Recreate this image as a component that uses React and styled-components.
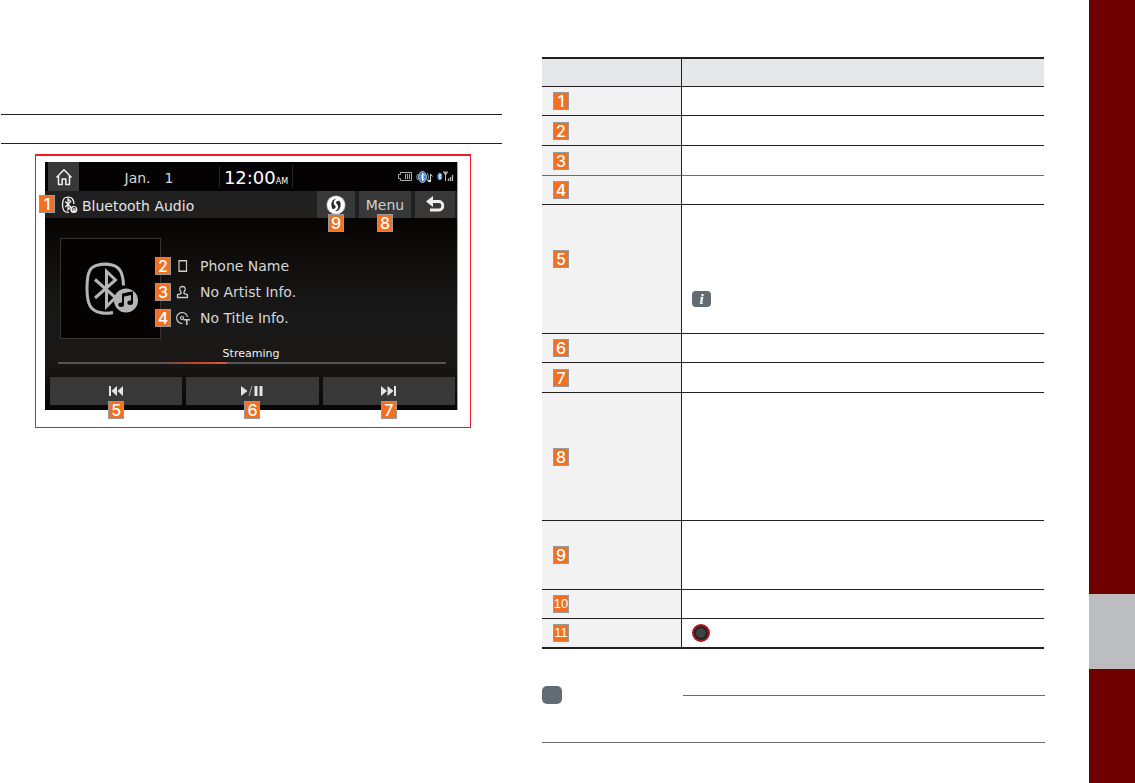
import React from "react";
import styled, { createGlobalStyle } from "styled-components";

const GlobalStyle = createGlobalStyle`
  *, *::before, *::after { box-sizing: border-box; }
  body { margin: 0; background: #fff; font-family: "Liberation Sans", Arial, sans-serif; }
  button { font: inherit; border: 0; padding: 0; margin: 0; color: inherit; cursor: pointer; }
  svg { display: block; }
`;

const Page = styled.div`
  display: flex;
  min-height: 100vh;
`;

const Main = styled.main`
  flex: 1;
  min-width: 0;
  display: grid;
  grid-template-columns: minmax(0, 1fr) minmax(0, 1fr);
  column-gap: 40px;
  align-items: start;
  padding-right: 45px;
`;

const Column = styled.section`
  padding-top: ${(p) => p.$top}px;
`;

const Heading = styled.div`
  height: 30px;
  margin-left: 1px;
  border-top: 1px solid #231f20;
  border-bottom: 1px solid #231f20;
`;

const Figure = styled.figure`
  margin: 10px 31px 0 35px;
  padding: 6px 13px 17px 9px;
  border: 1px solid #ed1c24;
  border-top-width: 2px;
`;

const Display = styled.div`
  display: flex;
  flex-direction: column;
  height: 248px;
  background: linear-gradient(180deg, #060403 56px, #0c0a09 80px, #191919 150px, #191817 200px, #080605 248px);
  box-shadow: 1px 0 0 #aaa;
  color: #d6d6d6;
  font-family: "DejaVu Sans", sans-serif;
  font-size: 14px;
  line-height: 18px;
`;

const Badge = styled.span`
  display: flex;
  align-items: center;
  justify-content: center;
  width: 16px;
  height: 18px;
  border: 1px solid #999;
  background: #f37021;
  color: #fff;
  font-family: ${(p) => (p.$narrow ? '"Liberation Sans"' : "Inter")}, sans-serif;
  font-size: ${(p) => (p.$narrow ? 13 : 16)}px;
  font-weight: ${(p) => (p.$narrow ? 400 : 500)};
  line-height: 16px;
`;

const BadgeAnchor = styled.span`
  position: absolute;
  z-index: 1;
  ${(p) => p.$side === "left" && "left: -6px; top: 4px;"}
  ${(p) => p.$side === "info" && "left: -6px; top: 4px;"}
  ${(p) => p.$side === "bottom" && "left: calc(50% - 8px); bottom: -14px;"}
`;

const StatusBar = styled.div`
  display: flex;
  align-items: center;
  height: 29px;
  padding: 0 3px;
  background: #040203;
`;

const DarkButton = styled.button`
  position: relative;
  display: flex;
  align-items: center;
  justify-content: center;
  align-self: stretch;
  width: ${(p) => p.$width}px;
  background: #383838;
  color: #d0d0d0;
`;

const DateText = styled.div`
  display: flex;
  justify-content: center;
  gap: 14px;
  width: 141px;
  padding-top: 3px;
  border-right: 1px solid #242424;
`;

const Clock = styled.div`
  display: flex;
  align-items: baseline;
  justify-content: center;
  width: 73px;
  padding-top: 3px;
  border-right: 1px solid #242424;
  color: #fff;
  font-size: 18px;
  line-height: 20px;
`;

const Meridiem = styled.small`
  font-size: 8px;
  line-height: 8px;
`;

const StatusIcons = styled.div`
  display: flex;
  align-items: center;
  gap: 4px;
  margin-left: auto;
`;

const TitleBar = styled.div`
  position: relative;
  display: flex;
  align-items: center;
  height: 27px;
  padding: 0 2px 0 16px;
  gap: 4px;
  background: #202020;
  color: #e4e4e4;
`;

const Title = styled.span`
  flex: 1;
  padding-top: 2px;
  white-space: nowrap;
`;

const Body = styled.div`
  display: flex;
  padding: 20px 15px 0;
`;

const Cover = styled.div`
  display: flex;
  align-items: center;
  justify-content: center;
  width: 101px;
  height: 101px;
  border: 1px solid #393431;
  background: #050202;
`;

const InfoList = styled.ul`
  margin: 0;
  padding: 15px 0 0;
  list-style: none;
`;

const InfoItem = styled.li`
  position: relative;
  display: flex;
  align-items: center;
  gap: 10px;
  height: 26px;
  padding-left: 14px;
  white-space: nowrap;
`;

const Streaming = styled.div`
  height: 23px;
  padding-top: 6px;
  text-align: center;
  color: #f2f2f2;
  font-size: 11px;
  line-height: 18px;
`;

const Track = styled.div`
  height: 2px;
  margin: 0 11px 0 13px;
  background: linear-gradient(90deg, #555 0 26%, #c8442a 36%, #e2583c 43%, #555 44%);
`;

const Controls = styled.div`
  display: grid;
  grid-template-columns: repeat(3, minmax(0, 1fr));
  gap: 4px;
  height: 28px;
  margin-top: 13px;
  padding: 0 2px 0 5px;
`;

const Table = styled.table`
  width: 100%;
  border-collapse: separate;
  border-spacing: 0;
  table-layout: fixed;
  border-top: 2px solid #231f20;
  border-bottom: 1px solid #231f20;
`;

const Row = styled.tr`
  height: ${(p) => p.$height}px;
`;

const HeadCell = styled.th`
  width: ${(p) => (p.$first ? "140px" : "auto")};
  padding: 0;
  background: #e6e7e8;
  border-bottom: 1px solid #231f20;
  border-right: ${(p) => (p.$first ? "1px solid #231f20" : "0")};
`;

const NumberCell = styled.td`
  padding: 0 0 ${(p) => (p.$raised ? 20 : 0)}px 11px;
  background: #f2f2f2;
  border-right: 1px solid #231f20;
  border-bottom: 1px solid ${(p) => (p.$soft ? "#6d6e70" : "#231f20")};
`;

const TextCell = styled.td`
  padding: ${(p) => (p.$raised ? 59 : 0)}px 10px 0;
  border-bottom: 1px solid ${(p) => (p.$soft ? "#6d6e70" : "#231f20")};
`;

const InfoMark = styled.span`
  display: flex;
  align-items: center;
  justify-content: center;
  width: 19px;
  height: 16px;
  border-radius: 4px;
  background: #626a72;
  color: #fff;
  font: italic bold 15px/16px "Liberation Serif", serif;
`;

const Knob = styled.span`
  display: block;
  width: 18px;
  height: 18px;
  border: 2px solid #b3131b;
  border-radius: 50%;
  background: #414042;
  box-shadow: inset 0 0 0 2px #231f20;
`;

const Note = styled.aside`
  display: flex;
  align-items: flex-start;
  height: 57px;
  margin: 37px -1px 0 0;
  border-bottom: 1px solid #626a72;
`;

const NoteMark = styled.span`
  width: 20px;
  height: 18px;
  border-radius: 5px;
  background: #626a72;
`;

const NoteLine = styled.span`
  flex: 1;
  height: 1px;
  margin: 9px 0 0 121px;
  background: #626a72;
`;

const SideBar = styled.aside`
  width: 46px;
  padding-top: 594px;
  background: #6f0000;
`;

const SideTab = styled.div`
  height: 75px;
  background: #bbbdc0;
`;

const btRune = "M-5-5 5 5 0 10V-10L5-5-5 5";

const HomeIcon = () => (
  <svg width="18" height="18" viewBox="0 0 18 18" fill="none" stroke="#eee" strokeWidth="1.5" strokeLinejoin="round">
    <path d="M1.500 9.500 9 1.800l7.500 7.700M3.500 8v8.500h3.700V11h3.600v5.500h3.700V8" />
  </svg>
);

const BtAudioIcon = () => (
  <svg width="17" height="18" viewBox="0 0 17 18" fill="none" stroke="#eee" strokeWidth="1.300">
    <path d="M8 16.300C3 16.500 1.500 14 1.500 8.500 1.500 3 3 1.200 7 1.200s5.800 1.800 5.800 6.800" />
    <path transform="translate(7 8.300) scale(.55)" strokeWidth="2.300" d={btRune} />
    <circle cx="12.800" cy="13.500" r="3.500" fill="#eee" stroke="none" />
    <path d="M11.800 14.800v-3l2.300-.4v2.900" stroke="#202020" strokeWidth=".9" />
  </svg>
);

const CoverIcon = () => (
  <svg width="54" height="54" viewBox="0 0 54 54" fill="none" stroke="#b5b5b8" strokeWidth="3">
    <path d="M29 50.500c-4 1-9 1-13 0C7 48.500 3 43 3 26.500S6 4.500 14 3c4-1 10-1 14 0 8 2 11 8 11.500 20.500" />
    <path d="M11 17.500 31.500 35.500 22.500 44.500V9.500L31.500 18 11 36" strokeWidth="3" />
    <circle cx="42" cy="38.500" r="12" fill="#b5b5b8" stroke="none" />
    <path d="M39 42.500V32.500l9-2V40.500" stroke="#080404" strokeWidth="2" />
    <path d="M39 33.200l9-2" stroke="#080404" strokeWidth="3" />
    <ellipse cx="37.200" cy="42.700" rx="2.800" ry="2.200" fill="#080404" stroke="none" />
    <ellipse cx="46.200" cy="40.800" rx="2.800" ry="2.200" fill="#080404" stroke="none" />
  </svg>
);

const SoundHoundIcon = () => (
  <svg width="20" height="20" viewBox="0 0 20 20" fill="none">
    <circle cx="10" cy="10" r="9.500" fill="#bbb" />
    <circle cx="10" cy="10" r="8.700" fill="#fff" />
    <ellipse cx="10" cy="10" rx="4.600" ry="6.200" fill="#252525" />
    <path d="M13.800 4.200C10 4.500 8.300 6.500 9 8.500c.6 1.500 2.400 1.800 2 3.700-.4 2-2.200 3-4.800 3.600" stroke="#fff" strokeWidth="2.400" />
  </svg>
);

const BackIcon = () => (
  <svg width="19" height="17" viewBox="0 0 19 17" fill="none">
    <path d="M5 5.500h8c5 0 5 8.500 0 8.500H4" stroke="#eee" strokeWidth="3" />
    <path d="M0 5.500 7 0v11z" fill="#eee" />
  </svg>
);

const BatteryIcon = () => (
  <svg width="14" height="9" viewBox="0 0 14 9" fill="none" stroke="#aaa">
    <path d="M2.500.5h11v8h-11V6.500h-2v-4h2zM7.500 2v5M9.500 2v5M11.500 2v5" />
  </svg>
);

const BtMusicIcon = () => (
  <svg width="17" height="12" viewBox="0 0 17 12" fill="none">
    <path d="M1.500 3q-1.500 3 0 6M11.500 2q2 4 0 8" stroke="#89a" />
    <ellipse cx="6.500" cy="6" rx="4" ry="5.500" fill="#347bc4" stroke="#9fc0e4" />
    <path transform="translate(6.500 6) scale(.38)" stroke="#fff" strokeWidth="2.500" d={btRune} />
    <path d="M14.500 10V3l2 2.500" stroke="#ccc" />
    <ellipse cx="13.500" cy="10" rx="1.700" ry="1.300" fill="#ddd" />
  </svg>
);

const BtSignalIcon = () => (
  <svg width="17" height="11" viewBox="0 0 17 11" fill="none">
    <ellipse cx="2.800" cy="5.500" rx="2.600" ry="3.800" fill="#347bc4" />
    <path transform="translate(2.800 5.500) scale(.28)" stroke="#fff" strokeWidth="3" d={btRune} />
    <path d="M6 1h5M6.500 1l2 3 2-3M8.500 1v9" stroke="#bbb" />
    <path d="M11.500 10V7.500M13.500 10V6M15.500 10V4" stroke="#bbb" strokeWidth="1.300" />
  </svg>
);

const PhoneIcon = () => (
  <svg width="15" height="14" viewBox="0 0 15 14" fill="none" stroke="#ccc">
    <path d="M4 1.500h7.500v11H4zM4 2h7.500M4 12h7.500" strokeWidth="1.200" />
  </svg>
);

const ArtistIcon = () => (
  <svg width="15" height="14" viewBox="0 0 15 14" fill="none" stroke="#ccc" strokeWidth="1.300">
    <path d="M6 7C3.500 4 5 1.500 7.500 1.500S11.500 4 9 7v1.500l3.500 1.300v2.700h-10V9.800L6 8.500z" />
  </svg>
);

const DiscIcon = () => (
  <svg width="15" height="14" viewBox="0 0 15 14" fill="none" stroke="#ccc" strokeWidth="1.200">
    <path d="M7.500 12.500A5.500 5.500 0 1 1 12.500 6" />
    <circle cx="7" cy="7" r="1.500" />
    <path d="M8.500 8.800h6.500M11.800 9v5" strokeWidth="1.500" />
  </svg>
);

const PrevIcon = () => (
  <svg width="14" height="10" viewBox="0 0 14 10" fill="#e4e4e4">
    <path d="M0 0h2v10H0zM8 0v10L2.500 5zM14 0v10L8.500 5z" />
  </svg>
);

const PlayPauseIcon = () => (
  <svg width="22" height="10" viewBox="0 0 22 10" fill="#e4e4e4">
    <path d="M0 0v10l6.500-5zM13.500 0h3v10h-3zM18.500 0h3v10h-3z" />
    <path d="M8 10 11 0" stroke="#aaa" fill="none" />
  </svg>
);

const NextIcon = () => (
  <svg width="15" height="10" viewBox="0 0 15 10" fill="#e4e4e4">
    <path d="M0 0v10l6-5zM6.500 0v10l6-5zM13 0h2v10h-2z" />
  </svg>
);

const rows = [
  { n: 1, height: 29 },
  { n: 2, height: 30 },
  { n: 3, height: 30, soft: true },
  { n: 4, height: 29 },
  { n: 5, height: 129, raised: true, mark: <InfoMark>i</InfoMark> },
  { n: 6, height: 29 },
  { n: 7, height: 30 },
  { n: 8, height: 128 },
  { n: 9, height: 69 },
  { n: 10, height: 29 },
  { n: 11, height: 29, mark: <Knob /> },
];

const info = [
  { n: 2, text: "Phone Name", icon: <PhoneIcon /> },
  { n: 3, text: "No Artist Info.", icon: <ArtistIcon /> },
  { n: 4, text: "No Title Info.", icon: <DiscIcon /> },
];

const controls = [
  { n: 5, label: "Previous", icon: <PrevIcon /> },
  { n: 6, label: "Play or pause", icon: <PlayPauseIcon /> },
  { n: 7, label: "Next", icon: <NextIcon /> },
];

const Callout = ({ n, side }) => (
  <BadgeAnchor $side={side}>
    <Badge>{n}</Badge>
  </BadgeAnchor>
);

export default function App() {
  return (
    <Page>
      <GlobalStyle />
      <Main>
        <Column $top={114}>
          <Heading />
          <Figure>
            <Display>
              <StatusBar>
                <DarkButton $width={31} aria-label="Home"><HomeIcon /></DarkButton>
                <DateText><span>Jan.</span><span>1</span></DateText>
                <Clock>12:00<Meridiem>AM</Meridiem></Clock>
                <StatusIcons>
                  <BatteryIcon />
                  <BtMusicIcon />
                  <BtSignalIcon />
                </StatusIcons>
              </StatusBar>
              <TitleBar>
                <Callout n={1} side="left" />
                <BtAudioIcon />
                <Title>Bluetooth Audio</Title>
                <DarkButton $width={38} aria-label="Sound search">
                  <SoundHoundIcon />
                  <Callout n={9} side="bottom" />
                </DarkButton>
                <DarkButton $width={52}>
                  Menu
                  <Callout n={8} side="bottom" />
                </DarkButton>
                <DarkButton $width={40} aria-label="Back"><BackIcon /></DarkButton>
              </TitleBar>
              <Body>
                <Cover><CoverIcon /></Cover>
                <InfoList>
                  {info.map((item) => (
                    <InfoItem key={item.n}>
                      <Callout n={item.n} side="info" />
                      {item.icon}
                      {item.text}
                    </InfoItem>
                  ))}
                </InfoList>
              </Body>
              <Streaming>Streaming</Streaming>
              <Track />
              <Controls>
                {controls.map((c) => (
                  <DarkButton key={c.n} aria-label={c.label}>
                    {c.icon}
                    <Callout n={c.n} side="bottom" />
                  </DarkButton>
                ))}
              </Controls>
            </Display>
          </Figure>
        </Column>
        <Column $top={57}>
          <Table>
            <thead>
              <Row $height={28}>
                <HeadCell $first />
                <HeadCell />
              </Row>
            </thead>
            <tbody>
              {rows.map((r) => (
                <Row key={r.n} $height={r.height}>
                  <NumberCell $raised={r.raised} $soft={r.soft}>
                    <Badge $narrow={r.n > 9}>{r.n}</Badge>
                  </NumberCell>
                  <TextCell $raised={r.raised} $soft={r.soft}>{r.mark}</TextCell>
                </Row>
              ))}
            </tbody>
          </Table>
          <Note>
            <NoteMark />
            <NoteLine />
          </Note>
        </Column>
      </Main>
      <SideBar>
        <SideTab />
      </SideBar>
    </Page>
  );
}
